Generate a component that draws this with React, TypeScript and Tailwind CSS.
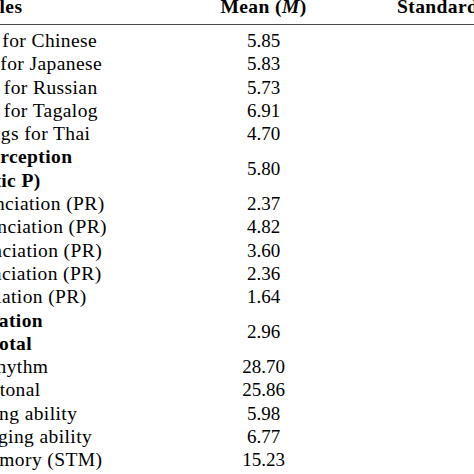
type LabelLine = { text: string; shift: string };

type Row = {
  lines: LabelLine[];
  mean: string;
  bold?: boolean;
};

// The table is cropped on the left, so each label line carries its own offset.
const ROWS: Row[] = [
  { lines: [{ text: "Ratings for Chinese", shift: "-ml-[65.4px]" }], mean: "5.85" },
  { lines: [{ text: "Ratings for Japanese", shift: "-ml-[67.4px]" }], mean: "5.83" },
  { lines: [{ text: "Ratings for Russian", shift: "-ml-[63.9px]" }], mean: "5.73" },
  { lines: [{ text: "Ratings for Tagalog", shift: "-ml-[63.9px]" }], mean: "6.91" },
  { lines: [{ text: "Ratings for Thai", shift: "-ml-[43.5px]" }], mean: "4.70" },
  {
    lines: [
      { text: "Phonetic perception", shift: "-ml-[101.1px]" },
      { text: "(Phonetic P)", shift: "-ml-[66.5px]" },
    ],
    mean: "5.80",
    bold: true,
  },
  { lines: [{ text: "Chinese pronunciation (PR)", shift: "-ml-[123.5px]" }], mean: "2.37" },
  { lines: [{ text: "Japanese pronunciation (PR)", shift: "-ml-[128px]" }], mean: "4.82" },
  { lines: [{ text: "Russian pronunciation (PR)", shift: "-ml-[125px]" }], mean: "3.60" },
  { lines: [{ text: "Tagalog pronunciation (PR)", shift: "-ml-[126.3px]" }], mean: "2.36" },
  { lines: [{ text: "Thai pronunciation (PR)", shift: "-ml-[113.2px]" }], mean: "1.64" },
  {
    lines: [
      { text: "Pronunciation", shift: "-ml-[81px]" },
      { text: "total", shift: "-ml-[7.9px]" },
    ],
    mean: "2.96",
    bold: true,
  },
  { lines: [{ text: "AMMA rhythm", shift: "-ml-[79px]" }], mean: "28.70" },
  { lines: [{ text: "AMMA tonal", shift: "-ml-[69px]" }], mean: "25.86" },
  { lines: [{ text: "Singing ability", shift: "-ml-[44.1px]" }], mean: "5.98" },
  { lines: [{ text: "Pitch singing ability", shift: "-ml-[73.4px]" }], mean: "6.77" },
  { lines: [{ text: "Short-term memory (STM)", shift: "-ml-[119.1px]" }], mean: "15.23" },
];

function TableRow({ row }: { row: Row }) {
  return (
    <div className="grid grid-cols-[203px_121px_1fr] items-center">
      <div className={`whitespace-nowrap tracking-[0.4px] ${row.bold ? "font-bold" : ""}`}>
        {row.lines.map((l, i) => (
          <div key={i} className={l.shift}>
            {l.text}
          </div>
        ))}
      </div>
      <div className="text-center text-[19px]">{row.mean}</div>
      <div />
    </div>
  );
}

export default function App() {
  return (
    <div
      className="relative h-[474px] w-[474px] overflow-hidden bg-white text-[19.5px] leading-[23.3px] text-black"
      style={{ fontFamily: '"Liberation Serif", "Times New Roman", serif' }}
    >
      <div className="-mt-[5px] grid grid-cols-[203px_121px_1fr] border-b border-[#4a4a4a] pb-[5.7px] font-bold tracking-[0.4px]">
        <div className="-ml-[59.6px] whitespace-nowrap">Variables</div>
        <div className="whitespace-nowrap text-center">
          Mean (<span className="italic">M</span>)
        </div>
        <div className="whitespace-nowrap pl-[73px]">Standard Deviation (SD)</div>
      </div>
      <div className="pt-[4px]">
        {ROWS.map((r, i) => (
          <TableRow key={i} row={r} />
        ))}
      </div>
    </div>
  );
}
